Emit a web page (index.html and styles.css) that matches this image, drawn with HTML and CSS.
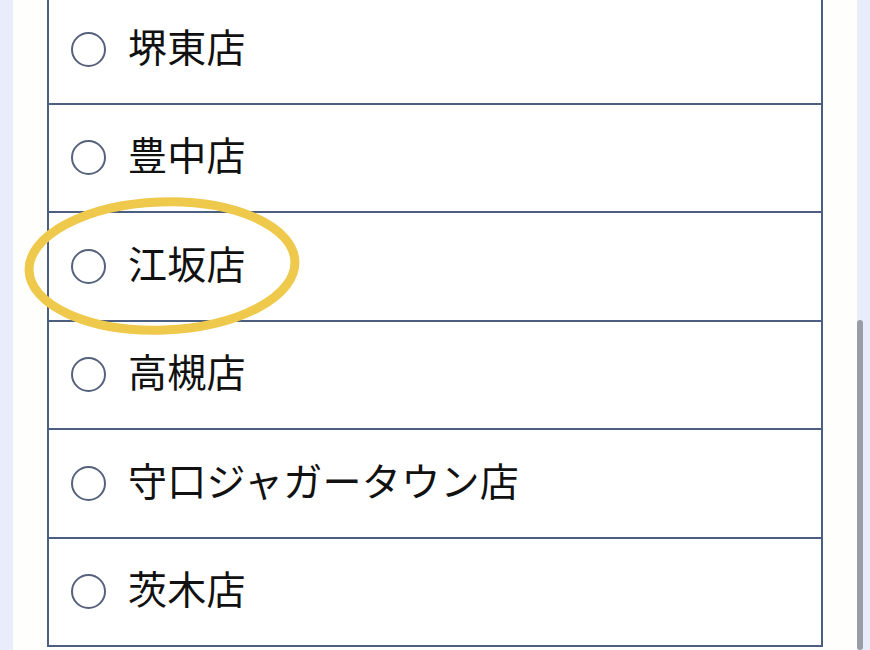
FILE: index.html
```html
<!DOCTYPE html>
<html lang="ja">
<head>
    <meta charset="UTF-8">
    <meta name="viewport" content="width=device-width, initial-scale=1.0">
    <link rel="stylesheet" href="styles.css">
</head>
<body>
    <div class="screen">
        <div class="edge"></div>
        <div class="page">
            <ul class="shop-list">
                <li class="shop"><span class="radio"></span><span class="name">堺東店</span></li>
                <li class="shop"><span class="radio"></span><span class="name">豊中店</span></li>
                <li class="shop marked">
                    <span class="radio"></span><span class="name">江坂店</span>
                    <!-- hand-drawn highlight -->
                    <svg class="ring" width="300" height="160" viewBox="0 0 300 160">
                        <ellipse cx="150" cy="80" rx="133" ry="64" transform="rotate(-2 150 80)"></ellipse>
                    </svg>
                </li>
                <li class="shop"><span class="radio"></span><span class="name">高槻店</span></li>
                <li class="shop"><span class="radio"></span><span class="name">守口ジャガータウン店</span></li>
                <li class="shop"><span class="radio"></span><span class="name">茨木店</span></li>
            </ul>
        </div>
        <div class="edge scroll">
            <div class="thumb"></div>
        </div>
    </div>
</body>
</html>
```

FILE: styles.css
```css
body {
    margin: 0;
    padding: 0;
    background-color: #e8ecfb;
    font-family: "Noto Sans CJK JP", "Noto Sans", sans-serif;
    overflow: hidden;
}

.screen {
    display: flex;
    height: 650px;
    overflow: hidden;
}

.edge {
    width: 13px;
    flex: none;
    background-color: #e8ecfb;
}

.scroll {
    display: flex;
    flex-direction: column;
}

.thumb {
    width: 6px;
    height: 360px;
    margin-top: 320px;
    border-radius: 3px;
    background-color: #9b9da6;
}

.page {
    flex: 1;
    background-color: #fefefc;
    padding: 0 34px;
}

.shop-list {
    list-style: none;
    margin: -6px 0 0 0;
    padding: 0;
    border-top: 2px solid #4c5f80;
    border-left: 2px solid #4c5f80;
    border-right: 2px solid #4c5f80;
    background-color: #fff;
}

.shop {
    position: relative;
    display: flex;
    align-items: center;
    height: 106.5px;
    padding-left: 22px;
    border-bottom: 2px solid #4c5f80;
    color: #111;
    font-size: 39px;
    letter-spacing: 0.3px;
}

.radio {
    width: 31px;
    height: 31px;
    border: 2px solid #56627c;
    border-radius: 50%;
    flex: none;
    margin-right: 22px;
}

.name {
    line-height: 1;
    margin-top: -8px;
}

.ring {
    position: absolute;
    left: -37px;
    top: -27px;
    overflow: visible;
}

.ring ellipse {
    fill: none;
    stroke: #eec94c;
    stroke-width: 9;
}
```
